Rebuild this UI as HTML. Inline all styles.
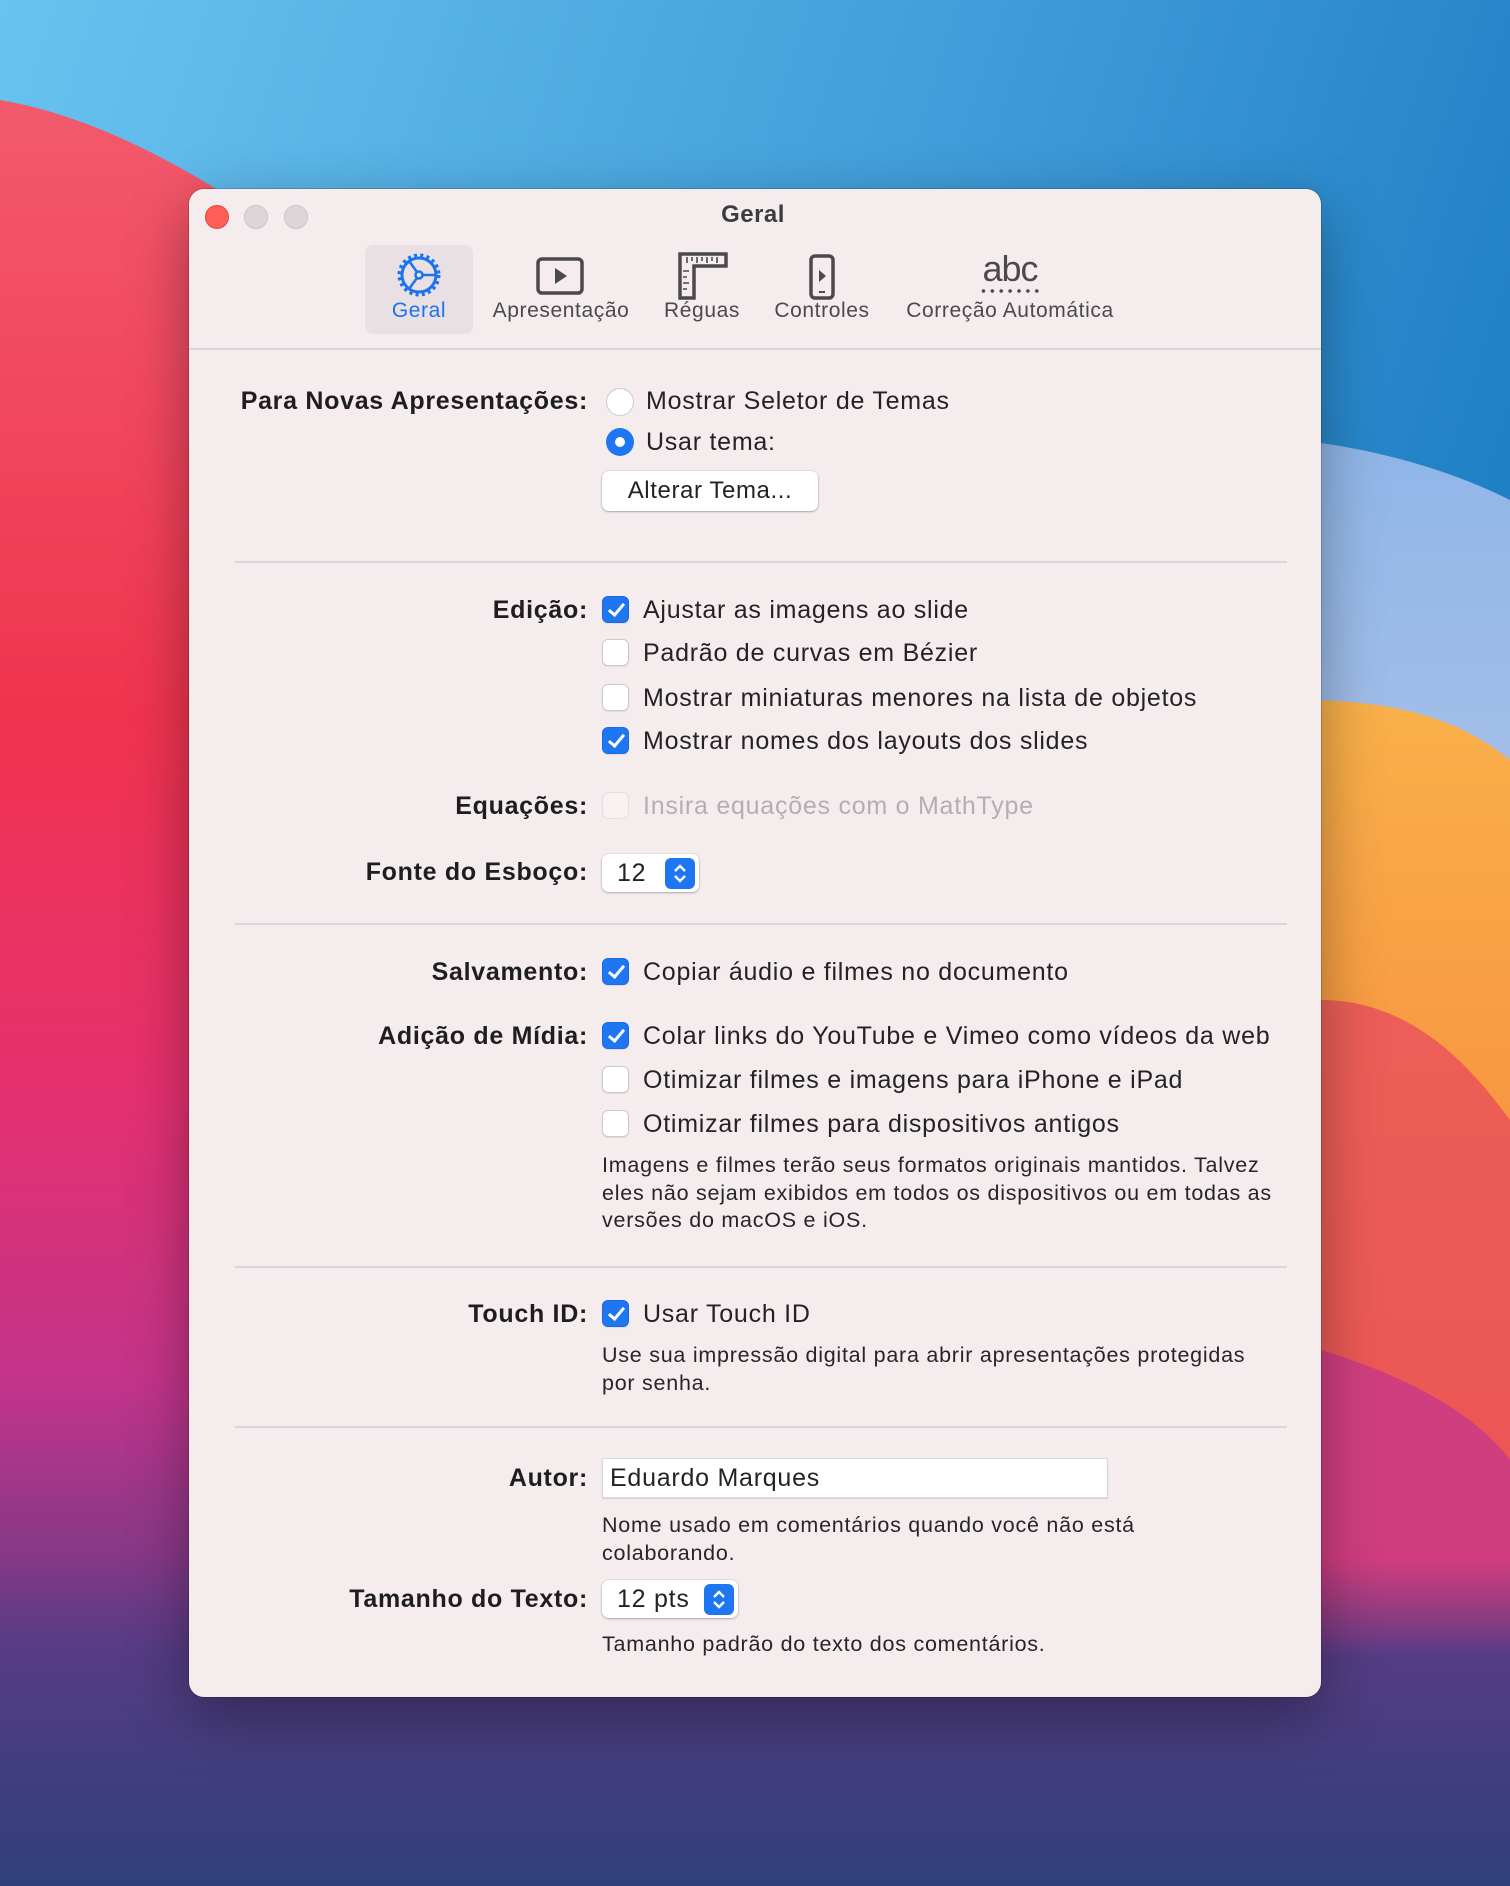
<!DOCTYPE html>
<html><head><meta charset="utf-8">
<style>
*{margin:0;padding:0;box-sizing:border-box}
body{width:1510px;height:1886px;position:relative;overflow:hidden;font-family:"Liberation Sans",sans-serif;color:#232323}
.bg{position:absolute;left:0;top:0}
.win{position:absolute;left:189px;top:189px;width:1132px;height:1508px;background:#f5ecee;border-radius:15px;box-shadow:0 20px 60px rgba(0,0,0,.35),0 0 0 1px rgba(0,0,0,.15)}
.a{position:absolute;white-space:nowrap}
.t{position:absolute;white-space:nowrap;font-size:25px;line-height:30px;letter-spacing:.75px}
.lbl{position:absolute;white-space:nowrap;font-size:25px;line-height:30px;font-weight:bold;right:922px;text-align:right;color:#1e1e1e;letter-spacing:.7px}
.cb{position:absolute;left:602px;width:27px;height:27px;border-radius:6px;background:#fff;border:1px solid #cfc8ca;box-shadow:0 1px 1px rgba(0,0,0,.08)}
.cb.on{background:#1f76f2;border-color:#1a6ae0}
.cb.on::after{content:"";position:absolute;left:9px;top:3px;width:6px;height:13px;border:solid #fff;border-width:0 3px 3px 0;transform:rotate(40deg)}
.cb.dis{background:#f7f1f2;border-color:#e6dfe1;box-shadow:none}
.sep{position:absolute;left:235px;width:1052px;height:2px;background:#dcd5d7}
.s{position:absolute;white-space:nowrap;font-size:21.5px;line-height:27.5px;color:#262626;left:602px;letter-spacing:.75px}
.tb{position:absolute;font-size:21px;color:#4a4a4a;text-align:center;white-space:nowrap;letter-spacing:.6px}
</style></head><body>
<svg class="bg" width="1510" height="1886" viewBox="0 0 1510 1886">
<defs>
<linearGradient id="sky" x1="0" y1="0" x2="1" y2="0.4"><stop offset="0" stop-color="#69c3f0"/><stop offset="0.6" stop-color="#3f9ad8"/><stop offset="1" stop-color="#1b7cc2"/></linearGradient>
<linearGradient id="warm" x1="0" y1="0" x2="0" y2="1"><stop offset="0" stop-color="#f25a6c"/><stop offset="0.35" stop-color="#f0334f"/><stop offset="0.55" stop-color="#e6306e"/><stop offset="0.72" stop-color="#c2348a"/><stop offset="0.86" stop-color="#6a3a86"/><stop offset="1" stop-color="#2e4278"/></linearGradient>
<linearGradient id="org" x1="0" y1="0" x2="0" y2="1"><stop offset="0" stop-color="#f9b04a"/><stop offset="0.5" stop-color="#f78c3e"/><stop offset="1" stop-color="#f2504a"/></linearGradient>
<linearGradient id="lb" x1="0" y1="0" x2="0" y2="1"><stop offset="0" stop-color="#8fb6e8"/><stop offset="1" stop-color="#e8d8ec"/></linearGradient>
<linearGradient id="bot" x1="0" y1="0" x2="0" y2="1"><stop offset="0" stop-color="#6a3a86" stop-opacity="0"/><stop offset="0.3" stop-color="#543c84"/><stop offset="1" stop-color="#2f4078"/></linearGradient>
</defs>
<rect width="1510" height="1886" fill="url(#sky)"/>
<path d="M1300 440 C1380 450 1450 470 1510 500 L1510 1886 L1300 1886Z" fill="url(#lb)"/>
<path d="M1300 700 C1400 700 1460 720 1510 760 L1510 1886 L1300 1886Z" fill="url(#org)"/>
<path d="M0 100 C120 120 240 200 320 260 C420 340 600 420 800 520 L800 1886 L0 1886Z" fill="url(#warm)"/>
<path d="M1321 1000 C1420 1000 1480 1080 1510 1120 L1510 1886 L1321 1886Z" fill="#e84a5e" opacity="0.75"/>
<path d="M1321 1350 C1420 1380 1480 1420 1510 1460 L1510 1886 L1321 1886Z" fill="#c8388a" opacity="0.8"/>
<rect x="0" y="1560" width="1510" height="326" fill="url(#bot)"/>
</svg>
<div class="win"></div>
<div class="a" style="left:205px;top:205px;width:24px;height:24px;border-radius:50%;background:#fe5f57;border:1px solid #e2463f"></div>
<div class="a" style="left:244px;top:205px;width:24px;height:24px;border-radius:50%;background:#dcd6d8;border:1px solid #cbc4c6"></div>
<div class="a" style="left:284px;top:205px;width:24px;height:24px;border-radius:50%;background:#dcd6d8;border:1px solid #cbc4c6"></div>
<div class="a" style="left:653px;top:201px;width:200px;text-align:center;font-size:24px;font-weight:bold;color:#3c3c3c;letter-spacing:.5px">Geral</div>
<div class="a" style="left:365px;top:245px;width:108px;height:89px;border-radius:8px;background:#e8e0e2"></div>
<svg class="a" style="left:396px;top:252px" width="46" height="46" viewBox="0 0 46 46">
<circle cx="23" cy="23" r="17" fill="none" stroke="#1a73f0" stroke-width="3"/>
<circle cx="23" cy="23" r="19.5" fill="none" stroke="#1a73f0" stroke-width="4" stroke-dasharray="3 3.2"/>
<circle cx="23" cy="23" r="3.5" fill="none" stroke="#1a73f0" stroke-width="2.5"/>
<path d="M26.5 23 H40 M21 20 L13 9 M21 26 L13 37" stroke="#1a73f0" stroke-width="2.5" fill="none"/>
</svg>
<div class="tb" style="left:365px;top:299px;width:108px;color:#1a73f0">Geral</div>
<svg class="a" style="left:536px;top:257px" width="50" height="38" viewBox="0 0 50 38">
<rect x="2" y="2" width="44" height="34" rx="4" fill="none" stroke="#4a4a4a" stroke-width="3.5"/>
<path d="M19 11 L31 19 L19 27Z" fill="#4a4a4a"/></svg>
<div class="tb" style="left:471px;top:299px;width:180px">Apresentação</div>
<svg class="a" style="left:677px;top:251px" width="52" height="50" viewBox="0 0 52 50">
<path d="M3 3 H49 V15 H17 V47 H3Z" fill="none" stroke="#4a4a4a" stroke-width="3.5"/>
<path d="M10 6v6 M15 6v4 M20 6v6 M25 6v4 M30 6v6 M35 6v4 M40 6v6 M6 20h6 M6 26h4 M6 32h6 M6 38h4" stroke="#4a4a4a" stroke-width="1.6"/></svg>
<div class="tb" style="left:652px;top:299px;width:100px">Réguas</div>
<svg class="a" style="left:808px;top:254px" width="30" height="46" viewBox="0 0 30 46">
<rect x="3" y="2" width="22" height="42" rx="4" fill="none" stroke="#4a4a4a" stroke-width="3.5"/>
<path d="M11 16 L18 22 L11 28Z" fill="#4a4a4a"/><path d="M11 38h6" stroke="#4a4a4a" stroke-width="2"/></svg>
<div class="tb" style="left:762px;top:299px;width:120px">Controles</div>
<div class="a" style="left:960px;top:248px;width:100px;text-align:center;font-size:36px;color:#4a4a4a;letter-spacing:-1px">abc</div>
<div class="a" style="left:979px;top:289px;width:62px;height:4px;background:radial-gradient(circle,#4a4a4a 1.6px,transparent 2px) 0 0/8.9px 4px repeat-x"></div>
<div class="tb" style="left:880px;top:299px;width:260px">Correção Automática</div>
<div class="a" style="left:189px;top:348px;width:1132px;height:2px;background:#dcd5d7"></div>

<div class="lbl" style="top:386px">Para Novas Apresentações:</div>
<div class="a" style="left:606px;top:388px;width:28px;height:28px;border-radius:50%;background:#fff;border:1px solid #cfc8ca"></div>
<div class="t" style="left:646px;top:386px">Mostrar Seletor de Temas</div>
<div class="a" style="left:606px;top:428px;width:28px;height:28px;border-radius:50%;background:#1f76f2"></div>
<div class="a" style="left:615px;top:437px;width:10px;height:10px;border-radius:50%;background:#fff"></div>
<div class="t" style="left:646px;top:427px">Usar tema:</div>
<div class="a" style="left:602px;top:471px;width:216px;height:40px;border-radius:7px;background:#fff;box-shadow:0 1px 2px rgba(0,0,0,.25),0 0 0 1px rgba(0,0,0,.06);font-size:24px;line-height:40px;text-align:center;letter-spacing:.6px">Alterar Tema...</div>
<div class="sep" style="top:561px"></div>

<div class="lbl" style="top:595px">Edição:</div>
<div class="cb on" style="top:596px"></div><div class="t" style="left:643px;top:595px">Ajustar as imagens ao slide</div>
<div class="cb" style="top:639px"></div><div class="t" style="left:643px;top:638px">Padrão de curvas em Bézier</div>
<div class="cb" style="top:684px"></div><div class="t" style="left:643px;top:683px">Mostrar miniaturas menores na lista de objetos</div>
<div class="cb on" style="top:727px"></div><div class="t" style="left:643px;top:726px">Mostrar nomes dos layouts dos slides</div>
<div class="lbl" style="top:791px">Equações:</div>
<div class="cb dis" style="top:792px"></div><div class="t" style="left:643px;top:791px;color:#b5aeb0">Insira equações com o MathType</div>
<div class="lbl" style="top:857px">Fonte do Esboço:</div>
<div class="a" style="left:602px;top:854px;width:97px;height:38px;border-radius:7px;background:#fff;box-shadow:0 1px 2px rgba(0,0,0,.25),0 0 0 1px rgba(0,0,0,.05)"></div>
<div class="t" style="left:617px;top:858px">12</div>
<div class="a" style="left:665px;top:858px;width:30px;height:31px;border-radius:6px;background:#1f76f2"></div>
<svg class="a" style="left:665px;top:858px" width="30" height="31"><path d="M10 13 L15 8 L20 13 M10 18 L15 23 L20 18" stroke="#fff" stroke-width="2.4" fill="none"/></svg>
<div class="sep" style="top:923px"></div>

<div class="lbl" style="top:957px">Salvamento:</div>
<div class="cb on" style="top:958px"></div><div class="t" style="left:643px;top:957px">Copiar áudio e filmes no documento</div>
<div class="lbl" style="top:1021px">Adição de Mídia:</div>
<div class="cb on" style="top:1022px"></div><div class="t" style="left:643px;top:1021px">Colar links do YouTube e Vimeo como vídeos da web</div>
<div class="cb" style="top:1066px"></div><div class="t" style="left:643px;top:1065px">Otimizar filmes e imagens para iPhone e iPad</div>
<div class="cb" style="top:1110px"></div><div class="t" style="left:643px;top:1109px">Otimizar filmes para dispositivos antigos</div>
<div class="s" style="top:1152px">Imagens e filmes terão seus formatos originais mantidos. Talvez<br>eles não sejam exibidos em todos os dispositivos ou em todas as<br>versões do macOS e iOS.</div>
<div class="sep" style="top:1266px"></div>

<div class="lbl" style="top:1299px">Touch ID:</div>
<div class="cb on" style="top:1300px"></div><div class="t" style="left:643px;top:1299px">Usar Touch ID</div>
<div class="s" style="top:1342px">Use sua impressão digital para abrir apresentações protegidas<br>por senha.</div>
<div class="sep" style="top:1426px"></div>

<div class="lbl" style="top:1463px">Autor:</div>
<div class="a" style="left:602px;top:1458px;width:506px;height:40px;background:#fff;border:1px solid #dcd6d8;box-shadow:0 1px 1px rgba(0,0,0,.12)"></div>
<div class="t" style="left:610px;top:1463px">Eduardo Marques</div>
<div class="s" style="top:1512px">Nome usado em comentários quando você não está<br>colaborando.</div>
<div class="lbl" style="top:1584px">Tamanho do Texto:</div>
<div class="a" style="left:602px;top:1580px;width:136px;height:38px;border-radius:7px;background:#fff;box-shadow:0 1px 2px rgba(0,0,0,.25),0 0 0 1px rgba(0,0,0,.05)"></div>
<div class="t" style="left:617px;top:1584px">12 pts</div>
<div class="a" style="left:704px;top:1584px;width:30px;height:31px;border-radius:6px;background:#1f76f2"></div>
<svg class="a" style="left:704px;top:1584px" width="30" height="31"><path d="M10 13 L15 8 L20 13 M10 18 L15 23 L20 18" stroke="#fff" stroke-width="2.4" fill="none"/></svg>
<div class="s" style="top:1631px">Tamanho padrão do texto dos comentários.</div>
</body></html>
